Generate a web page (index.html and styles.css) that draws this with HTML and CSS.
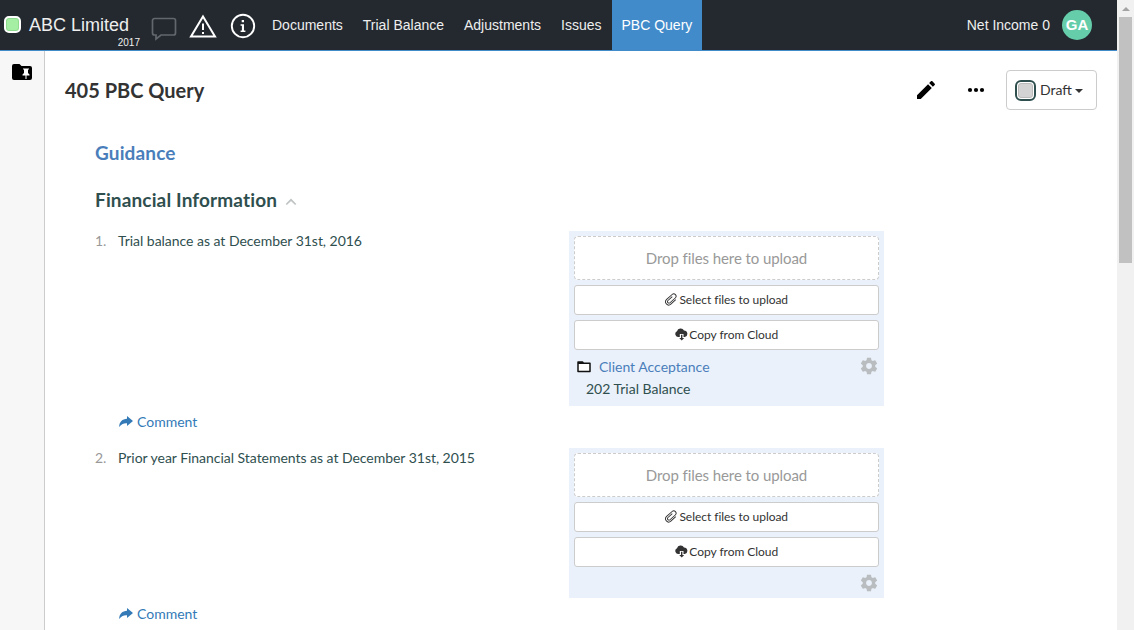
FILE: index.html
```html
<!DOCTYPE html>
<html lang="en">
<head>
<meta charset="utf-8">
<title>405 PBC Query</title>
<link rel="stylesheet" href="styles.css">
</head>
<body>
<svg class="defs" width="0" height="0">
  <symbol id="gear" viewBox="0 0 24 24"><path d="M19.43 12.98c.04-.32.07-.64.07-.98s-.03-.66-.07-.98l2.11-1.65c.19-.15.24-.42.12-.64l-2-3.46c-.12-.22-.39-.3-.61-.22l-2.49 1c-.52-.4-1.08-.73-1.69-.98l-.38-2.65C14.46 2.18 14.25 2 14 2h-4c-.25 0-.46.18-.49.42l-.38 2.65c-.61.25-1.17.59-1.69.98l-2.49-1c-.23-.09-.49 0-.61.22l-2 3.46c-.13.22-.07.49.12.64l2.11 1.65c-.04.32-.07.65-.07.98s.03.66.07.98l-2.11 1.65c-.19.15-.24.42-.12.64l2 3.46c.12.22.39.3.61.22l2.49-1c.52.4 1.08.73 1.69.98l.38 2.65c.03.24.24.42.49.42h4c.25 0 .46-.18.49-.42l.38-2.65c.61-.25 1.17-.59 1.69-.98l2.49 1c.23.09.49 0 .61-.22l2-3.46c.12-.22.07-.49-.12-.64l-2.11-1.65zM12 15.5c-1.93 0-3.5-1.57-3.5-3.5s1.57-3.5 3.5-3.5 3.5 1.57 3.5 3.5-1.57 3.5-3.5 3.5z"/></symbol>
  <symbol id="clip" viewBox="0 0 13 13"><path transform="rotate(48 6.500 6.500)" d="M4.900 4v5.800a1.500 1.500 0 0 0 3 0V2.700a2.200 2.200 0 0 0-4.700 0v7.400a3.100 3.100 0 0 0 6.300 0V3.500" fill="none" stroke="currentColor" stroke-width=".95"/></symbol>
  <symbol id="cloud" viewBox="0 0 13 13"><path d="M4.800 9H3A3 3 0 0 1 2 3.300 3.800 3.800 0 0 1 9 2.400 3.350 3.350 0 0 1 9.800 9H8.500V6H4.800z"/><path d="M6 6.800h1.400V10h1.800l-2.500 2.600L4.200 10H6z"/></symbol>
  <symbol id="share" viewBox="0 0 14 12"><path d="M8 0l6 5-6 5V7.200C4.500 7 2 8.200.2 11 .2 6 3.500 3 8 2.800z"/></symbol>
</svg>
<div class="window">
  <div class="app">
    <header class="topbar">
      <span class="entity-state"></span>
      <div class="entity"><span class="entity-name">ABC Limited</span><span class="entity-year">2017</span></div>
      <svg class="ico-chat" width="26" height="26" viewBox="0 0 26 26"><path d="M3.500 1.500h19a2 2 0 0 1 2 2v12.500a2 2 0 0 1-2 2H10l-5 4V18H3.500a2 2 0 0 1-2-2V3.500a2 2 0 0 1 2-2z" fill="none" stroke="#62676d" stroke-width="1.700"/></svg>
      <svg class="ico-warn" width="30" height="26" viewBox="0 0 30 26"><path d="M15 3.500 27 23.600H3z" fill="none" stroke="#fff" stroke-width="2"/><path d="M14 10.500h2V17h-2zM14 19h2v2h-2z" fill="#fff"/></svg>
      <svg class="ico-info" width="26" height="26" viewBox="0 0 26 26"><circle cx="13" cy="13" r="11.200" fill="none" stroke="#fff" stroke-width="1.900"/><path d="M11.700 7h2.300v2.300h-2.300zM10.600 11.200H14v6.300h1.400V19h-4.800v-1.500h1.300v-4.800h-1.300z" fill="#fff"/></svg>
      <nav class="nav"><a>Documents</a><a>Trial Balance</a><a>Adjustments</a><a>Issues</a><a class="active">PBC Query</a></nav>
      <span class="income">Net Income 0</span>
      <span class="avatar">GA</span>
    </header>
    <div class="body">
      <aside class="rail">
        <svg width="20" height="16" viewBox="0 0 20 16"><path d="M2 0h5.500l2 2H18a2 2 0 0 1 2 2v10a2 2 0 0 1-2 2H2a2 2 0 0 1-2-2V2a2 2 0 0 1 2-2z"/><path d="M11 4.500h6v1h-1V9l1.500 1.500v1h-3V15h-1v-3.500h-3v-1L12 9V5.500h-1z" fill="#fff"/></svg>
      </aside>
      <main class="page">
        <div class="titlebar">
          <h1>405 PBC Query</h1>
          <svg class="ico-edit" width="24" height="24" viewBox="0 0 24 24"><path d="M3 17.250V21h3.750L17.810 9.940l-3.750-3.750L3 17.250zM20.710 7.040c.39-.39.39-1.020 0-1.410l-2.340-2.340c-.39-.39-1.020-.39-1.410 0l-1.830 1.830 3.750 3.750 1.830-1.830z"/></svg>
          <svg class="ico-more" width="18" height="6" viewBox="0 0 18 6"><circle cx="3" cy="3" r="2.100"/><circle cx="9" cy="3" r="2.100"/><circle cx="15" cy="3" r="2.100"/></svg>
          <button class="status"><span class="status-box"><i></i></span><span>Draft</span><i class="caret"></i></button>
        </div>
        <h2 class="guidance">Guidance</h2>
        <h2 class="section">Financial Information<svg width="12" height="8" viewBox="0 0 12 8"><path d="M1.300 6.500 6 1.800l4.700 4.700" fill="none" stroke="#bfc3c3" stroke-width="1.700"/></svg></h2>
        <section class="query first">
          <div class="row">
            <span class="num">1.</span><p>Trial balance as at December 31st, 2016</p>
            <div class="upload">
              <div class="drop">Drop files here to upload</div>
              <button class="btn"><svg width="13" height="13"><use href="#clip"/></svg>Select files to upload</button>
              <button class="btn"><svg width="13" height="13"><use href="#cloud"/></svg>Copy from Cloud</button>
              <div class="files">
                <svg class="folder" width="14" height="12" viewBox="0 0 14 12"><path d="M1 1h4.500l1 1.200H13V10.500H1z" fill="#fff" stroke="#111" stroke-width="1.500" stroke-linejoin="round"/><path d="M1 1h4.500l1 1.200H13v.8H1z" fill="#111"/></svg>
                <div class="file-names"><a>Client Acceptance</a><span>202 Trial Balance</span></div>
                <svg class="gear" width="20" height="20"><use href="#gear"/></svg>
              </div>
            </div>
          </div>
          <a class="comment"><svg width="14" height="12"><use href="#share"/></svg>Comment</a>
        </section>
        <section class="query">
          <div class="row">
            <span class="num">2.</span><p>Prior year Financial Statements as at December 31st, 2015</p>
            <div class="upload short">
              <div class="drop">Drop files here to upload</div>
              <button class="btn"><svg width="13" height="13"><use href="#clip"/></svg>Select files to upload</button>
              <button class="btn"><svg width="13" height="13"><use href="#cloud"/></svg>Copy from Cloud</button>
              <div class="files"><svg class="gear" width="20" height="20"><use href="#gear"/></svg></div>
            </div>
          </div>
          <a class="comment"><svg width="14" height="12"><use href="#share"/></svg>Comment</a>
        </section>
      </main>
    </div>
  </div>
  <div class="scrollbar"><i class="arrow"></i><i class="thumb"></i></div>
</div>
</body>
</html>
```
FILE: styles.css
```css
* { box-sizing: border-box; }
body { margin: 0; overflow: hidden; font: 14px/20px Lato, sans-serif; color: #2f4f4f; background: #fff; }
svg { flex: none; display: block; }
.defs { position: absolute; }
h1, h2, p { margin: 0; }
button { font: inherit; color: #333; }
.window { display: flex; height: 630px; }
.app { flex: 1; min-width: 0; display: flex; flex-direction: column; overflow: hidden; }

.topbar { flex: none; height: 51px; display: flex; align-items: flex-start; background: #23292f; border-bottom: 1px solid #428bca; color: #eee; font: 14px/50px "Liberation Sans", sans-serif; }
.entity-state { flex: none; width: 17px; height: 17px; margin: 16px 0 0 4px; border: 2px solid #fff; border-radius: 5px; background: #a5efa5; box-shadow: inset 0 0 0 1px #8edc8e; }
.entity { width: 119px; margin-left: 8px; display: flex; flex-direction: column; padding-top: 15px; white-space: nowrap; }
.entity-name { font-size: 18px; line-height: 20px; }
.entity-year { font-size: 10px; line-height: 12px; align-self: flex-end; margin: 2px 8px 0 0; }
.ico-chat { margin: 17px 0 0 3px; }
.ico-warn { margin: 13px 0 0 11px; }
.ico-info { margin: 12.500px 0 0 11.500px; }
.nav { display: flex; margin-left: 6.500px; height: 50px; }
.nav a { padding: 0 10px; white-space: nowrap; }
.nav .active { background: #428bca; color: #fff; }
.income { margin-left: auto; }
.avatar { width: 30px; height: 30px; margin: 10px 25px 0 12px; border-radius: 50%; background: #66cdaa; color: #fff; font-weight: bold; font-size: 15px; line-height: 30px; text-align: center; }

.body { flex: 1; display: flex; min-height: 0; }
.rail { flex: none; width: 45px; background: #f7f7f7; border-right: 1px solid #ccc; padding: 13px 0 0 12px; }
.page { flex: 1; padding: 19px 20px 0; }
.titlebar { display: flex; align-items: center; height: 40px; }
h1 { font-size: 20px; line-height: 24px; color: #333; margin-right: auto; }
.ico-edit { margin-right: 29px; }
.ico-more { margin-right: 21px; }
.status { width: 91px; height: 40px; display: flex; align-items: center; gap: 4px; padding: 0 8px; background: #fff; border: 1px solid #ccc; border-radius: 4px; }
.status-box { width: 21px; height: 21px; padding: 1px; border: 2px solid #2f4f4f; border-radius: 6px; background: #fff; }
.status-box i { display: block; height: 15px; border: 1px solid #bbb; border-radius: 3px; background: #d3d3d3; }
.caret { border: 4px solid transparent; border-top-color: #333; border-bottom: 0; margin: 1px 0 0 -1px; }
h2 { font-size: 19px; line-height: 24px; margin-left: 30px; letter-spacing: .14px; }
.guidance { margin-top: 31px; color: #4a7ebb; }
.section { margin-top: 23px; display: flex; align-items: center; gap: 8px; }
.section svg { margin-top: 4px; }
.query { margin: 16px 0 0 30px; }
.first { margin-top: 19px; }
.row { display: flex; align-items: flex-start; }
.num { width: 23px; color: #999; }
.row p { width: 451px; letter-spacing: -.03px; }
.upload { width: 315px; height: 175px; padding: 5px; background: #eaf1fa; }
.short { height: 150px; }
.drop { height: 44px; border: 1px dashed #ccc; border-radius: 4px; background: #fff; color: #999; font-size: 15px; line-height: 43px; text-align: center; letter-spacing: -.08px; }
.btn { width: 100%; height: 30px; margin-top: 5px; padding: 0; display: flex; align-items: center; justify-content: center; gap: 1.500px; background: #fff; border: 1px solid #ccc; border-radius: 3px; font-size: 12px; letter-spacing: -.04px; }
.btn svg { fill: currentColor; margin-top: -1px; }
.files { display: flex; align-items: flex-start; padding: 6px 0 0 3px; }
.folder { margin-top: 5px; }
.file-names { display: flex; flex-direction: column; line-height: 22px; }
.file-names a { color: #4a7ebb; margin-left: 8px; }
.file-names span { margin-left: -5px; }
.gear { margin-left: auto; fill: #b9bdbf; }
.comment { display: flex; align-items: center; gap: 4px; margin: 6px 0 0 24px; color: #337ab7; }
.comment svg { fill: currentColor; margin-top: -1px; }
.row + .comment { height: 20px; }

.scrollbar { flex: none; width: 17px; background: #f1f1f1; padding: 7px 2px 0; display: flex; flex-direction: column; align-items: center; }
.arrow { border: 4px solid transparent; border-bottom-color: #a3a3a3; border-top: 0; }
.thumb { width: 13px; height: 246px; margin-top: 6px; background: #c1c1c1; }
```
